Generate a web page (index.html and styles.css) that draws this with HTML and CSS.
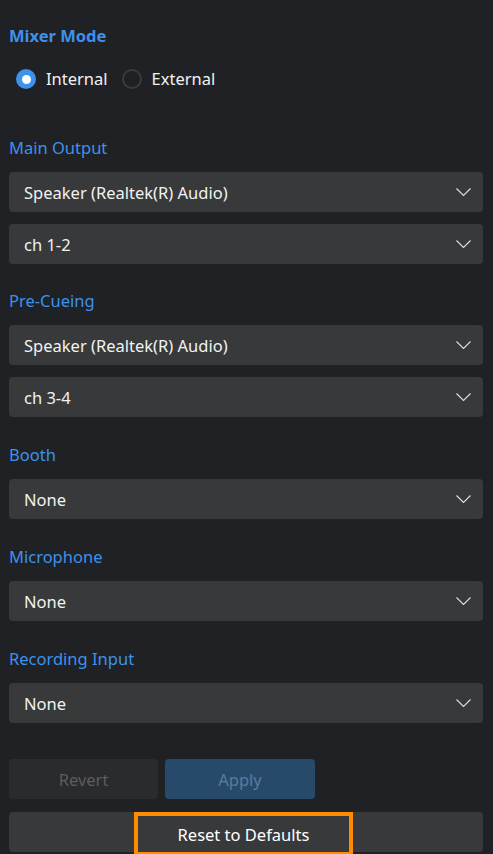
FILE: index.html
```html
<!DOCTYPE html>
<html lang="en">
<head>
<meta charset="utf-8">
<title>Audio Settings</title>
<link rel="stylesheet" href="styles.css">
</head>
<body>
<div class="panel">
  <h2 class="title">Mixer Mode</h2>
  <div class="radios">
    <label class="radio checked"><span class="dot"></span><span>Internal</span></label>
    <label class="radio"><span class="dot"></span><span>External</span></label>
  </div>

  <section class="group first">
    <div class="label">Main Output</div>
    <div class="select"><span>Speaker (Realtek(R) Audio)</span><svg class="chev" width="15" height="8" viewBox="0 0 15 8"><path d="M0.5 0.5 L7.5 7.5 L14.5 0.5" fill="none" stroke="#e0e0e0" stroke-width="1.1"/></svg></div>
    <div class="select"><span>ch 1-2</span><svg class="chev" width="15" height="8" viewBox="0 0 15 8"><path d="M0.5 0.5 L7.5 7.5 L14.5 0.5" fill="none" stroke="#e0e0e0" stroke-width="1.1"/></svg></div>
  </section>

  <section class="group second">
    <div class="label">Pre-Cueing</div>
    <div class="select"><span>Speaker (Realtek(R) Audio)</span><svg class="chev" width="15" height="8" viewBox="0 0 15 8"><path d="M0.5 0.5 L7.5 7.5 L14.5 0.5" fill="none" stroke="#e0e0e0" stroke-width="1.1"/></svg></div>
    <div class="select"><span>ch 3-4</span><svg class="chev" width="15" height="8" viewBox="0 0 15 8"><path d="M0.5 0.5 L7.5 7.5 L14.5 0.5" fill="none" stroke="#e0e0e0" stroke-width="1.1"/></svg></div>
  </section>

  <section class="group">
    <div class="label">Booth</div>
    <div class="select"><span>None</span><svg class="chev" width="15" height="8" viewBox="0 0 15 8"><path d="M0.5 0.5 L7.5 7.5 L14.5 0.5" fill="none" stroke="#e0e0e0" stroke-width="1.1"/></svg></div>
  </section>

  <section class="group">
    <div class="label">Microphone</div>
    <div class="select"><span>None</span><svg class="chev" width="15" height="8" viewBox="0 0 15 8"><path d="M0.5 0.5 L7.5 7.5 L14.5 0.5" fill="none" stroke="#e0e0e0" stroke-width="1.1"/></svg></div>
  </section>

  <section class="group">
    <div class="label">Recording Input</div>
    <div class="select"><span>None</span><svg class="chev" width="15" height="8" viewBox="0 0 15 8"><path d="M0.5 0.5 L7.5 7.5 L14.5 0.5" fill="none" stroke="#e0e0e0" stroke-width="1.1"/></svg></div>
  </section>

  <div class="actions">
    <button class="btn revert">Revert</button>
    <button class="btn apply">Apply</button>
  </div>
  <button class="btn reset"><span class="focus">Reset to Defaults</span></button>
</div>
</body>
</html>
```

FILE: styles.css
```css
html, body {
  margin: 0;
  padding: 0;
  background: #202124;
  height: 100%;
  overflow: hidden;
}
body {
  font-family: "Noto Sans", "Open Sans", sans-serif;
  font-size: 16.5px;
  color: #f2f2f2;
}
.panel {
  padding: 25px 10px 0 9px;
  display: flex;
  flex-direction: column;
}
.title {
  margin: 0;
  font-size: 16.5px;
  font-weight: 700;
  line-height: 22px;
  color: #3c92ec;
}
.radios {
  display: flex;
  align-items: center;
  margin-top: 21px;
  margin-left: 7px;
  gap: 14px;
  height: 22px;
}
.radio {
  display: flex;
  align-items: center;
  gap: 10px;
  line-height: 22px;
}
.dot {
  width: 16px;
  height: 16px;
  border-radius: 50%;
  border: 2px solid #3a3b3d;
  box-sizing: content-box;
  position: relative;
}
.radio.checked .dot {
  border: none;
  width: 20px;
  height: 20px;
  background: #3c92ec;
}
.radio.checked .dot::after {
  content: "";
  position: absolute;
  left: 5.5px;
  top: 5.5px;
  width: 9px;
  height: 9px;
  border-radius: 50%;
  background: #ffffff;
}
.group {
  display: flex;
  flex-direction: column;
  gap: 12px;
  margin-top: 27px;
}
.group.first {
  margin-top: 47px;
}
.group.second {
  margin-top: 26px;
}
.label {
  line-height: 22px;
  color: #3c92ec;
  margin-bottom: 1px;
}
.select {
  height: 40px;
  background: #38393b;
  border-radius: 4px;
  display: flex;
  align-items: center;
  justify-content: space-between;
  padding: 0 12px 0 15px;
}
.chev {
  display: block;
}
.actions {
  display: flex;
  gap: 7px;
  margin-top: 36px;
}
.btn {
  font-family: inherit;
  font-size: 16.5px;
  height: 40px;
  border: none;
  border-radius: 4px;
  padding: 0;
  width: 150px;
}
.revert {
  background: #2a2b2d;
  color: #5c5d60;
  width: 149px;
}
.apply {
  background: #274a6b;
  color: #5a7b9a;
}
.reset {
  width: 100%;
  margin-top: 13px;
  background: #38393b;
  color: #ffffff;
  display: flex;
  justify-content: center;
  align-items: center;
}
.focus {
  display: flex;
  align-items: center;
  justify-content: center;
  width: 211px;
  height: 36px;
  border: 4px solid #ff8c00;
  margin-top: 4px;
  margin-right: 5px;
}
```
